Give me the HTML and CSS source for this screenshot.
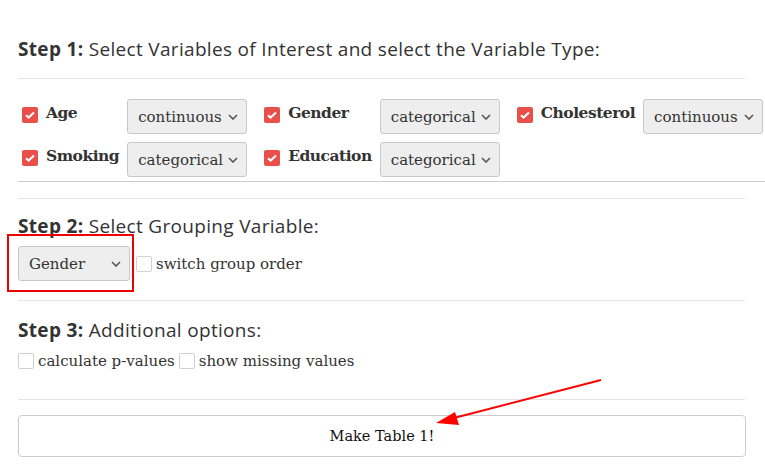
FILE: index.html
```html
<!DOCTYPE html>
<html>
<head>
<meta charset="utf-8">
<link rel="stylesheet" href="styles.css">
</head>
<body>
<div class="page">
  <h3 class="step"><b>Step 1:</b> Select Variables of Interest and select the Variable Type:</h3>
  <hr class="rule">
  <div class="vars">
    <div class="var"><span class="cb on"><svg viewBox="0 0 16 16"><path d="M4 8.2l2.6 2.4L12 5.6" /></svg></span><span class="vname">Age</span></div>
    <div class="sel w120"><span>continuous</span><svg class="chev" viewBox="0 0 10 6"><path d="M1 1l4 4 4-4"/></svg></div>
    <div class="var"><span class="cb on"><svg viewBox="0 0 16 16"><path d="M4 8.2l2.6 2.4L12 5.6" /></svg></span><span class="vname">Gender</span></div>
    <div class="sel w120"><span>categorical</span><svg class="chev" viewBox="0 0 10 6"><path d="M1 1l4 4 4-4"/></svg></div>
    <div class="var"><span class="cb on"><svg viewBox="0 0 16 16"><path d="M4 8.2l2.6 2.4L12 5.6" /></svg></span><span class="vname">Cholesterol</span></div>
    <div class="sel w120"><span>continuous</span><svg class="chev" viewBox="0 0 10 6"><path d="M1 1l4 4 4-4"/></svg></div>
    <div class="var"><span class="cb on"><svg viewBox="0 0 16 16"><path d="M4 8.2l2.6 2.4L12 5.6" /></svg></span><span class="vname">Smoking</span></div>
    <div class="sel w120"><span>categorical</span><svg class="chev" viewBox="0 0 10 6"><path d="M1 1l4 4 4-4"/></svg></div>
    <div class="var"><span class="cb on"><svg viewBox="0 0 16 16"><path d="M4 8.2l2.6 2.4L12 5.6" /></svg></span><span class="vname">Education</span></div>
    <div class="sel w120"><span>categorical</span><svg class="chev" viewBox="0 0 10 6"><path d="M1 1l4 4 4-4"/></svg></div>
  </div>
  <hr class="rule r2">
  <h3 class="step"><b>Step 2:</b> Select Grouping Variable:</h3>
  <div class="group">
    <div class="sel wgroup"><span>Gender</span><svg class="chev" viewBox="0 0 10 6"><path d="M1 1l4 4 4-4"/></svg></div>
    <label class="opt"><span class="cb"></span>switch group order</label>
    <div class="redbox"></div>
  </div>
  <hr class="rule r3">
  <h3 class="step"><b>Step 3:</b> Additional options:</h3>
  <div class="opts">
    <label class="opt"><span class="cb"></span>calculate p-values</label>
    <label class="opt"><span class="cb"></span>show missing values</label>
  </div>
  <hr class="rule r4">
  <div class="btnwrap">
    <button class="make">Make Table 1!</button>
  </div>
</div>
<svg class="arrow" width="765" height="467" viewBox="0 0 765 467">
  <line x1="601" y1="380" x2="450" y2="419" stroke="#f00" stroke-width="2"/>
  <polygon points="436,423 455,412 459,425" fill="#f00"/>
</svg>
</body>
</html>
```
FILE: styles.css
```css
html, body {
  margin: 0;
  padding: 0;
  background: #fff;
}
body {
  font-family: "DejaVu Serif", serif;
  color: #333;
  position: relative;
  width: 765px;
  height: 467px;
  overflow: hidden;
}
.page {
  width: 727px;
  padding-left: 18px;
}
.step {
  font-family: "Open Sans", "Noto Sans", sans-serif;
  font-weight: 400;
  font-size: 19px;
  line-height: 24px;
  margin: 0;
  color: #333;
  letter-spacing: 0.32px;
}
.page > .step:first-child {
  padding-top: 37px;
}
.step b {
  font-weight: 700;
}
.rule {
  border: 0;
  border-top: 1px solid #e6e6e6;
  margin: 17px 0 0 0;
  height: 0;
}
.vars {
  display: grid;
  grid-template-columns: auto auto auto auto auto auto;
  justify-content: start;
  row-gap: 8px;
  margin-top: 20px;
  width: 747px;
  padding-bottom: 4px;
  border-bottom: 1px solid #ccc;
}
.var {
  display: flex;
  align-items: flex-start;
  padding-left: 4px;
  padding-top: 8px;
  margin-right: 8px;
}
.vname {
  font-weight: 700;
  font-size: 15.5px;
  letter-spacing: -0.5px;
  line-height: 16px;
  margin-left: 8px;
  margin-top: -2px;
  color: #333;
}
.cb {
  display: inline-block;
  width: 14px;
  height: 14px;
  border: 1px solid #d0d0d0;
  border-radius: 2px;
  background: #fff;
  flex: none;
  box-sizing: content-box;
}
.cb.on {
  width: 16px;
  height: 16px;
  border: 0;
  background: #e9504a;
}
.cb svg {
  display: block;
  width: 16px;
  height: 16px;
  fill: none;
  stroke: #fff;
  stroke-width: 2;
}
.sel {
  display: flex;
  align-items: center;
  justify-content: space-between;
  box-sizing: border-box;
  height: 35px;
  border: 1px solid #c8c8c8;
  border-radius: 3px;
  background: #eee;
  font-size: 15px;
  color: #333;
  padding: 0 8px 0 10px;
}
.vars .sel {
  margin-right: 13px;
}
.w120 { width: 120px; }
.wgroup { width: 112px; }
.chev {
  width: 10px;
  height: 6px;
  fill: none;
  stroke: #555;
  stroke-width: 1.6;
  flex: none;
}
.r2 { margin-top: 16px; }
.r2 + .step { margin-top: 15px; }
.group {
  position: relative;
  display: flex;
  align-items: center;
  margin-top: 8px;
}
.opt {
  display: flex;
  align-items: center;
  font-size: 15px;
  color: #333;
  margin-left: 6px;
}
.opt .cb {
  margin-right: 4px;
}
.opts .opt:first-child { margin-left: 0; }
.opts .opt + .opt { margin-left: 4px; }
.redbox {
  position: absolute;
  left: -11px;
  top: -12px;
  width: 127px;
  height: 58px;
  box-sizing: border-box;
  border: 2px solid #e00;
}
.r3 { margin-top: 19px; }
.r3 + .step { margin-top: 17px; }
.opts {
  display: flex;
  margin-top: 10px;
}
.r4 { margin-top: 29px; }
.btnwrap {
  margin-top: 15px;
}
.make {
  display: block;
  width: 728px;
  height: 42px;
  background: #fff;
  border: 1px solid #ccc;
  border-radius: 4px;
  font-family: "DejaVu Serif", serif;
  font-size: 14.5px;
  color: #111;
  padding: 0;
}
.arrow {
  position: absolute;
  left: 0;
  top: 0;
  pointer-events: none;
}
```
